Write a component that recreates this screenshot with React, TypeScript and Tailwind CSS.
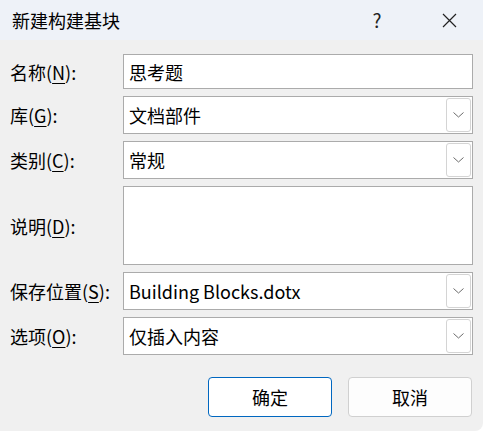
import React from "react";

const font = { fontFamily: '"Noto Sans CJK SC", "Noto Sans", sans-serif' };

function Label({ text, k }: { text: string; k: string }) {
  return (
    <div className="w-[123px] shrink-0 pl-[10px] text-[18px] text-black leading-none">
      {text}(<span className="underline underline-offset-[3px] decoration-[1px]">{k}</span>):
    </div>
  );
}

function Chevron() {
  return (
    <div className="w-[25px] h-[34px] mr-[1px] border border-[#d4d4d4] rounded-[3px] bg-white flex items-center justify-center">
      <svg width="11" height="6" viewBox="0 0 11 6" fill="none">
        <path d="M0.5 0.5 L5.5 5 L10.5 0.5" stroke="#6b6b6b" strokeWidth="1" />
      </svg>
    </div>
  );
}

function Field({ value, combo, h }: { value?: string; combo?: boolean; h: string }) {
  return (
    <div className={`w-[350px] ${h} border border-[#ababab] bg-white flex items-center`}>
      <div className="flex-1 pl-[5px] text-[18px] text-black leading-none">{value}</div>
      {combo && <Chevron />}
    </div>
  );
}

export default function App() {
  return (
    <div style={font} className="w-[483px] h-[431px] bg-[#f0f0f0] rounded-br-[8px] overflow-hidden flex flex-col">
      <div className="h-[40px] bg-[#eef2f8] flex items-center">
        <div className="pl-[12px] text-[18px] text-black flex-1 leading-none">新建构建基块</div>
        <div className="w-[60px] text-center text-[19px] text-[#222] mr-[19px]">?</div>
        <div className="w-[46px] mr-[11px] flex items-center justify-center">
          <svg width="15" height="15" viewBox="0 0 15 15">
            <path d="M1 1 L14 14 M14 1 L1 14" stroke="#222" strokeWidth="1.2" />
          </svg>
        </div>
      </div>
      <div className="flex flex-col gap-[7px] pt-[14px]">
        <div className="flex items-center">
          <Label text="名称" k="N" />
          <Field value="思考题" h="h-[35px]" />
        </div>
        <div className="flex items-center">
          <Label text="库" k="G" />
          <Field value="文档部件" combo h="h-[38px]" />
        </div>
        <div className="flex items-center">
          <Label text="类别" k="C" />
          <Field value="常规" combo h="h-[38px]" />
        </div>
        <div className="flex items-center">
          <Label text="说明" k="D" />
          <Field h="h-[79px]" />
        </div>
        <div className="flex items-center">
          <Label text="保存位置" k="S" />
          <Field value="Building Blocks.dotx" combo h="h-[38px]" />
        </div>
        <div className="flex items-center">
          <Label text="选项" k="O" />
          <Field value="仅插入内容" combo h="h-[38px]" />
        </div>
      </div>
      <div className="flex justify-end gap-[16px] pr-[11px] pt-[22px]">
        <button className="w-[124px] h-[40px] bg-white border border-[#0067c0] rounded-[4px] text-[18px] text-black">
          确定
        </button>
        <button className="w-[124px] h-[40px] bg-[#fdfdfd] border border-[#d0d0d0] rounded-[4px] text-[18px] text-black">
          取消
        </button>
      </div>
    </div>
  );
}
